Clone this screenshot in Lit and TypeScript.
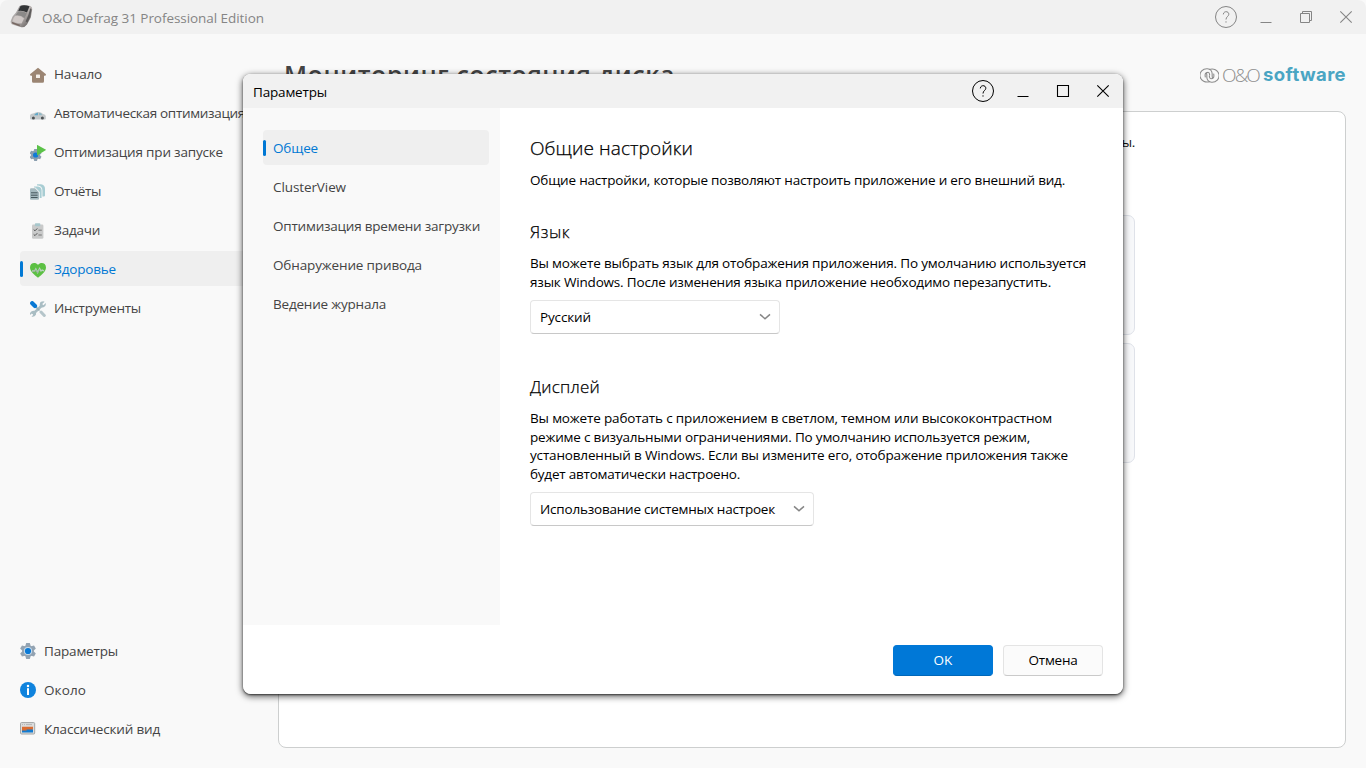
import { LitElement, html, css, svg } from "lit";
import { customElement, property } from "lit/decorators.js";

/** One line of text, tracked so that it fills the given width. */
@customElement("text-line")
class TextLine extends LitElement {
  @property({ type: Number }) w = 0;
  @property() text = "";
  static styles = css`
    :host { display: block; white-space: nowrap; }
    span { display: inline-block; }
  `;
  updated() {
    const el = this.renderRoot.querySelector("span") as HTMLElement;
    el.style.letterSpacing = "0px";
    const diff = this.w - el.getBoundingClientRect().width;
    if (this.w) el.style.letterSpacing = `${diff / this.text.length}px`;
  }
  render() {
    return html`<span>${this.text}</span>`;
  }
}

const gear = (cx: number, cy: number, r: number, fill: string) => svg`
  <g transform="translate(${cx} ${cy})" fill=${fill}>
    <circle r=${r * 0.72}></circle>
    ${[0, 60, 120, 180, 240, 300].map((a) => svg`<path transform="rotate(${a}) scale(${r / 8})" d="M-3 -4 L-1.8 -8 H1.8 L3 -4Z"></path>`)}
  </g>`;

const icons: Record<string, unknown> = {
  home: svg`<path d="M8 .8 16 7.2Q16 9 14.6 8.8H14V14.2Q14 15.8 12.6 15.8H3.4Q2 15.8 2 14.2V8.8H1.4Q0 9 0 7.2Z" fill="#9b8573"/><rect x="6" y="7.4" width="4" height="3.6" rx=".6" fill="#f4eee8"/>`,
  car: svg`<path d="M0 9.5Q.2 7.8 3 7.6L6.5 6.2Q11 5.6 13 8 15.8 8.6 15.8 10.2V12.8Q15.8 13.6 15 13.6H1Q0 13.6 0 12.6Z" fill="#c4c9cb"/><path d="M4.6 8.4Q6 6.6 8 6.8V9.2H4.4Z" fill="#62a9c8"/><path d="M9 6.8Q11.3 6.8 12.2 9L9 9.2Z" fill="#8fb8c6"/><circle cx="3.4" cy="12" r="1.5" fill="#4c5154"/><circle cx="12.4" cy="12" r="1.5" fill="#4c5154"/>`,
  startup: svg`${gear(5.6, 10, 6, "#8a9eaf")}<circle cx="5.6" cy="10" r="2.6" fill="#0f7ad6"/><path d="M7 -.2 16.2 4.8 7 10.4Z" fill="#5bc248"/>`,
  reports: svg`<path d="M7 .2H11Q15 .6 15 5V11.5Q15 12.6 13.8 12.6H7Z" fill="#a8cdd3"/><path d="M3.6 1.6H8Q12.4 2 12.4 6.5V14H3.6Z" fill="#f9f9f9"/><path d="M4 2.4H8Q11.6 2.8 11.6 6.5V14H4Z" fill="#a8cdd3"/><path d="M0 3.6H5.4L9.7 8V15.2H0Z" fill="#f9f9f9"/><path d="M0 5.4Q0 4.3 1.1 4.3H5L9 8.3V14.7Q9 15.8 7.9 15.8H1.1Q0 15.8 0 14.7Z" fill="#a5b9bf"/><path d="M1 8.8H7.6M1 11.2H7.6M1 13.5H7.6" stroke="#45565c" stroke-width="1"/>`,
  tasks: svg`<rect x="2" y="1.4" width="11.4" height="14.4" rx="1.3" fill="#c9caca"/><rect x="4.9" y=".2" width="5.4" height="3" rx=".8" fill="#a8c7cc"/><path d="m3.7 6.6 1.3 1.2 2.3-2.4M3.7 11.4 5 12.6l2.3-2.4" fill="none" stroke="#555" stroke-width="1"/><path d="M8.4 7.2h3.4M8.4 12h3.4" stroke="#777"/>`,
  health: svg`<path d="M8 15.7C5 13 0 9.6 0 5.4 0 .6 5.6 -.2 8 3 10.4 -.2 16 .6 16 5.4 16 9.6 11 13 8 15.7Z" fill="#5cc043"/><path d="M2 9H4.6L5.8 7 7.6 10.4 9.6 6.4 11 9 12.2 8 14 8.8" fill="none" stroke="#b9d3bd" stroke-width="1.4"/><path d="M2.4 9.3H4.8L5.9 7.6 7.6 10.8 9.7 7" fill="none" stroke="#8a9a90" stroke-width=".6"/>`,
  tools: svg`<path d="m2.8 13.2 9.3-9" stroke="#a9bdc3" stroke-width="2.6"/><path d="M11 .8Q13.5-.4 14.6.8L12.2 3 13.4 4.3 15.8 2Q16.3 5.6 13.6 6.3 9.2 7.2 9.8 3 10 1.4 11 .8ZM5 9.9Q1.8 9-.1 12.2L.2 14 2.1 12.2 3.5 13.5 1.5 15.7Q4.5 16.3 5.9 13.8 6.5 11.4 5 9.9Z" fill="#a9bdc3"/><path d="M5 5 9.5 9.5" stroke="#97adb5" stroke-width="1.5"/><path d="M2.2 2.2 5 5" stroke="#0878d4" stroke-width="4.2" stroke-linecap="round"/><path d="m11 11 3.3 3.5" stroke="#b5c5ca" stroke-width="3" stroke-linecap="round"/>`,
  gear: svg`${gear(8, 8, 8, "#93a3b2")}<circle cx="8" cy="8" r="4.1" fill="#c8dcec"/><circle cx="8" cy="8" r="3.1" fill="#0b7ad6"/>`,
  info: svg`<circle cx="8" cy="8" r="8" fill="#0f83dd"/><circle cx="8" cy="4.1" r="1.25" fill="#fff"/><rect x="7" y="6.2" width="2" height="6.8" fill="#fff"/>`,
  classic: svg`<rect x=".5" y="1.6" width="14.2" height="11.4" rx="1" fill="#dcdddd" stroke="#a2a5a6"/><path d="M2 3.6h1M4 3.6h1M6 3.6h6" stroke="#b5b5b5"/><path d="M2 5.8H13V8.5L7 11H2Z" fill="#d96d33"/><path d="M2 9.4H6.6V8.6H13V11.6H2Z" fill="#147cd0"/>`,
};

const main: [string, string, number][] = [
  ["home", "Начало", 48],
  ["car", "Автоматическая оптимизация", 191],
  ["startup", "Оптимизация при запуске", 169],
  ["reports", "Отчёты", 47],
  ["tasks", "Задачи", 46],
  ["health", "Здоровье", 62],
  ["tools", "Инструменты", 87],
];
const foot: [string, string, number][] = [
  ["gear", "Параметры", 74],
  ["info", "Около", 42],
  ["classic", "Классический вид", 116],
];
const pages: [string, number][] = [
  ["Общее", 45],
  ["ClusterView", 73],
  ["Оптимизация времени загрузки", 207],
  ["Обнаружение привода", 149],
  ["Ведение журнала", 113],
];

const controls = (restored: boolean) => html`
  <svg class="controls" width="142" height="24" viewBox="0 0 142 24" fill="none" stroke="currentColor">
    <circle cx="12" cy="12" r="10.5"></circle>
    <path d="M9.3 9.4C9.4 5.7 15 5.9 14.8 9.3 14.7 11.5 12 11.7 12 14.5M12 16.3V17.6"></path>
    <path d="M46.5 17.5H57.5"></path>
    ${restored
      ? svg`<path d="M86.5 8.5h9v9h-9ZM88.5 8.5v-2h9v9h-2"></path>`
      : svg`<path d="M86.5 6.5h11v11h-11Z" stroke-width="1.1"></path>`}
    <path d="m126.3 6.3 11.4 11.4M137.7 6.3l-11.4 11.4" stroke-width="1.1"></path>
  </svg>`;

const chevron = html`<svg width="12" height="8" viewBox="0 0 12 8" fill="none" stroke="#858585" stroke-width="1.5"><path d="M1 1.4 6 5.7 11 1.4"></path></svg>`;

@customElement("app-root")
class AppRoot extends LitElement {
  static styles = css`
    :host {
      display: block; position: relative; width: 1366px; height: 768px; overflow: hidden;
      background: #f9f9f9; color: #444;
      font: 13.5px/19px "Open Sans", "Noto Sans", sans-serif;
    }
    * { box-sizing: border-box; }
    svg { display: block; flex: none; }
    .titlebar { height: 34px; display: flex; align-items: center; padding: 0 10px; background: #f1f1f1; color: #858585; border-radius: 8px 8px 0 0; }
    .titlebar text-line { margin: 3px 0 0 8px; flex: 1; }
    .body { display: grid; grid-template-columns: 278px 1fr; height: 734px; }
    .side { display: flex; flex-direction: column; justify-content: space-between; padding: 22px 0 21px 20px; }
    nav { display: grid; gap: 4px; }
    .item { height: 35px; display: flex; align-items: center; gap: 8px; padding-left: 10px; border-radius: 4px; position: relative; }
    .item svg { margin-bottom: 1px; }
    .foot .item { padding-left: 0; }
    .side nav:first-child text-line, .side nav:first-child svg { margin-top: 2px; }
    .side nav:first-child svg { margin-bottom: 0; }
    .active { background: #efefef; color: #0078d4; }
    .active::before { content: ""; position: absolute; left: 0; top: 10px; width: 3px; height: 16px; border-radius: 1.5px; background: #0078d4; }
    .content { padding: 20px 20px 20px 0; display: flex; flex-direction: column; }
    .head { display: flex; justify-content: space-between; height: 57px; padding-left: 6px; }
    .head .title { font: 600 25px/32px "Open Sans", sans-serif; padding-top: 4px; }
    .brand { display: flex; align-items: flex-start; color: #8d8d8d; padding-top: 14px; }
    .brand svg { margin: 0 3px 0 0; }
    .oo { font: 300 19px/15px "Open Sans", sans-serif; }
    .soft { font: 700 18.5px/15px Inter, sans-serif; color: #4aa5c3; margin: -1px 0 0 4px; }
    .panel { flex: 1; border: 1px solid #cdcfcf; border-radius: 8px; background: #fff; padding: 21px 210px 0 24px; color: #111; }
    .panel .note { display: flex; justify-content: flex-end; height: 82px; }
    .card { height: 120px; border: 1px solid #dfe2e9; border-radius: 7px; background: #f7f8fa; margin-bottom: 8px; }
    .dialog, .shade { position: absolute; left: 243px; top: 74px; width: 880px; height: 620px; border-radius: 8px; }
    .dialog { display: grid; grid-template: 34px 517px 1fr / 257px 1fr; background: #fff; color: #000; overflow: hidden; }
    .shade { box-shadow: 0 1px 2px rgba(0,0,0,.6), 0 2px 6px 1px rgba(0,0,0,.55); }
    .dtitle { grid-column: 1 / 3; background: #f1f1f1; display: flex; align-items: center; justify-content: space-between; padding: 0 10px; }
    .dtitle text-line { padding-top: 2px; }
    .pages { background: #f9f9f9; color: #444; padding: 22px 11px 0 20px; align-content: start; }
    .pages text-line { padding-top: 2px; }
    .form { padding: 26px 30px 0; }
    .form h1, .form h2 { margin: 0; font-weight: 300; -webkit-text-stroke: .25px #000; }
    .form h1 { font-size: 19px; line-height: 28px; }
    .form h2 { font-size: 17px; line-height: 24px; }
    .intro { padding-top: 9px; height: 58px; }
    .para { padding-top: 10px; line-height: 18.5px; }
    .select { height: 34px; display: flex; align-items: center; justify-content: space-between; margin-top: 9px; padding: 1px 8px 0 9px; border: 1px solid #e5e5e5; border-bottom-color: #c8c8c8; border-radius: 4px; background: #fff; }
    .select svg { margin-top: -1px; }
    .lang { width: 250px; margin-bottom: 41px; }
    .display { width: 284px; }
    .buttons { grid-column: 1 / 3; display: flex; justify-content: flex-end; gap: 10px; padding: 20px 20px 0; }
    .btn { width: 100px; height: 31px; display: flex; align-items: center; justify-content: center; border: 1px solid #e4e4e4; border-bottom-color: #cacaca; border-radius: 4px; background: #fbfbfb; }
    .primary { background: #0078d7; border-color: #0078d7; border-bottom-color: #0067b8; color: #fff; }
  `;

  item([icon, text, w]: [string, string, number]) {
    return html`<div class="item ${icon === "health" ? "active" : ""}">
      <svg width="16" height="16" viewBox="0 0 16 16">${icons[icon]}</svg>
      <text-line .text=${text} .w=${w}></text-line>
    </div>`;
  }

  line(text: string, w: number) {
    return html`<text-line .text=${text} .w=${w}></text-line>`;
  }

  render() {
    return html`
      <header class="titlebar">
        <svg width="24" height="26" viewBox="0 0 24 26">
          <defs><linearGradient id="m" x1="0" y1="0" x2="1" y2="1"><stop offset="0" stop-color="#8d8d8f"/><stop offset=".5" stop-color="#bdb7b5"/><stop offset="1" stop-color="#4e4a49"/></linearGradient></defs>
          <path d="M9.5 2Q13 .2 20.5 2 22.6 3 22.2 5.5L20.8 13.5 17 20.5Q14.5 23.8 11.5 23.3L3 20.8Q.3 19.8.7 17L2.6 12.5 6 8.5Z" fill="url(#m)"/>
          <path d="M10.5 1.9Q14 .4 19.5 2.2L17 8.6Q12.5 6 8.2 7Z" fill="#333537"/>
          <path d="M8.2 7.6Q13 6.6 17 9.2L14.6 14Q10.5 10.6 5.6 11.3Z" fill="#8b8988"/>
          <path d="M5 12Q10.5 11 14 14.6L11.6 19.6Q7 19.6 2.6 17.2 3 14 5 12Z" fill="#cfc8c6"/>
          <path d="M20.4 4.2 21.6 5.4 20.2 13 17.4 18.4 15.6 17.6Q18.8 11 20.4 4.2Z" fill="#5d5b5b"/>
          <path d="M1.8 17.8 10 20.8 9.6 22.3 2.4 19.8Z" fill="#776862"/>
        </svg>
        ${this.line("O&O Defrag 31 Professional Edition", 222)}
        ${controls(true)}
      </header>
      <div class="body">
        <aside class="side">
          <nav>${main.map((i) => this.item(i))}</nav>
          <nav class="foot">${foot.map((i) => this.item(i))}</nav>
        </aside>
        <main class="content">
          <div class="head">
            <div class="title">${this.line("Мониторинг состояния диска", 391)}</div>
            <div class="brand">
              <svg width="19" height="15" viewBox="0 0 19 15" fill="none" stroke="#8d8d8d" stroke-width="1.1">
                <path d="M9.8 13.4A7 6.6 0 1 1 7.4 .8Q12 1.2 12.2 6 12 8.6 12.6 10.4M5.4 9.4Q4.2 4.2 8 4.2 10 4.6 9.5 7.5"/>
                <path transform="rotate(180 9.5 7.5)" d="M9.8 13.4A7 6.6 0 1 1 7.4 .8Q12 1.2 12.2 6 12 8.6 12.6 10.4M5.4 9.4Q4.2 4.2 8 4.2 10 4.6 9.5 7.5"/>
              </svg>
              <div class="oo">${this.line("O&O", 37)}</div>
              <div class="soft">${this.line("software", 83)}</div>
            </div>
          </div>
          <section class="panel">
            <div class="note">${this.line("Состояние всех дисков системы.", 205)}</div>
            <div class="card"></div>
            <div class="card"></div>
          </section>
        </main>
      </div>
      <div class="shade"></div>
      <div class="dialog">
        <div class="dtitle">${this.line("Параметры", 74)}${controls(false)}</div>
        <nav class="pages">
          ${pages.map(([t, w], i) => html`<div class="item ${i ? "" : "active"}">${this.line(t, w)}</div>`)}
        </nav>
        <div class="form">
          <h1>${this.line("Общие настройки", 163)}</h1>
          <div class="intro">${this.line("Общие настройки, которые позволяют настроить приложение и его внешний вид.", 535)}</div>
          <h2>${this.line("Язык", 40)}</h2>
          <div class="para">
            ${this.line("Вы можете выбрать язык для отображения приложения. По умолчанию используется", 556)}
            ${this.line("язык Windows. После изменения языка приложение необходимо перезапустить.", 521)}
          </div>
          <div class="select lang">${this.line("Русский", 51)}${chevron}</div>
          <h2>${this.line("Дисплей", 70)}</h2>
          <div class="para">
            ${this.line("Вы можете работать с приложением в светлом, темном или высококонтрастном", 522)}
            ${this.line("режиме с визуальными ограничениями. По умолчанию используется режим,", 500)}
            ${this.line("установленный в Windows. Если вы измените его, отображение приложения также", 538)}
            ${this.line("будет автоматически настроено.", 210)}
          </div>
          <div class="select display">${this.line("Использование системных настроек", 235)}${chevron}</div>
        </div>
        <div class="buttons">
          <div class="btn primary">${this.line("OK", 19)}</div>
          <div class="btn">${this.line("Отмена", 49)}</div>
        </div>
      </div>
    `;
  }
}
